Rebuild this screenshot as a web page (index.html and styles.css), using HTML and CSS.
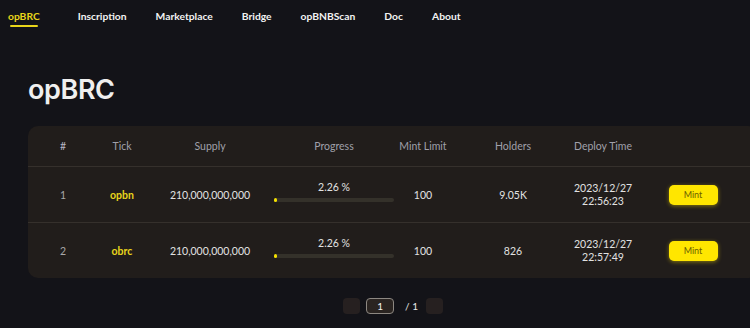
FILE: index.html
```html
<!DOCTYPE html>
<html>
<head>
    <title>opBRC</title>
    <link rel="stylesheet" href="styles.css">
</head>
<body>
    <nav class="nav">
        <a class="nav-item active">opBRC</a>
        <a class="nav-item">Inscription</a>
        <a class="nav-item">Marketplace</a>
        <a class="nav-item">Bridge</a>
        <a class="nav-item">opBNBScan</a>
        <a class="nav-item">Doc</a>
        <a class="nav-item">About</a>
    </nav>

    <main class="main">
        <h1 class="title">opBRC</h1>

        <div class="token-table">
            <div class="row head">
                <div class="cell hash">#</div>
                <div class="cell">Tick</div>
                <div class="cell">Supply</div>
                <div class="cell">Progress</div>
                <div class="cell">Mint Limit</div>
                <div class="cell">Holders</div>
                <div class="cell">Deploy Time</div>
                <div class="cell"></div>
            </div>
            <div class="row">
                <div class="cell idx">1</div>
                <div class="cell tick">opbn</div>
                <div class="cell">210,000,000,000</div>
                <div class="cell progress">
                    <span>2.26 %</span>
                    <div class="bar"><div class="fill" style="width: 2.26%"></div></div>
                </div>
                <div class="cell">100</div>
                <div class="cell">9.05K</div>
                <div class="cell time">2023/12/27<br>22:56:23</div>
                <div class="cell"><button class="mint-btn">Mint</button></div>
            </div>
            <div class="row">
                <div class="cell idx">2</div>
                <div class="cell tick">obrc</div>
                <div class="cell">210,000,000,000</div>
                <div class="cell progress">
                    <span>2.26 %</span>
                    <div class="bar"><div class="fill" style="width: 2.26%"></div></div>
                </div>
                <div class="cell">100</div>
                <div class="cell">826</div>
                <div class="cell time">2023/12/27<br>22:57:49</div>
                <div class="cell"><button class="mint-btn">Mint</button></div>
            </div>
        </div>

        <div class="pager">
            <span class="pager-btn"></span>
            <span class="pager-input">1</span>
            <span class="pager-total">/ 1</span>
            <span class="pager-btn"></span>
        </div>
    </main>
</body>
</html>
```

FILE: styles.css
```css
body {
    margin: 0;
    background: #131318;
    color: #e6e6e6;
    font-family: Lato, "Liberation Sans", sans-serif;
    overflow: hidden;
}
.nav {
    display: flex;
    gap: 29px;
    height: 32px;
    align-items: center;
    padding-left: 8px;
}
.nav-item {
    position: relative;
    font-size: 10.3px;
    font-weight: 700;
    color: #f2f2f2;
}
.nav-item.active {
    color: #e9d51a;
    margin-right: 9px;
}
.nav-item.active::after {
    content: "";
    position: absolute;
    left: 2px;
    right: 2px;
    bottom: -5px;
    height: 2px;
    border-radius: 1px;
    background: #e9d51a;
}
.main {
    width: 730px;
    padding-left: 28px;
}
.title {
    margin: 43px 0 21px;
    font-family: Inter, sans-serif;
    font-size: 27px;
    font-weight: 600;
    line-height: 30px;
    letter-spacing: -0.4px;
    color: #efefef;
}
.token-table {
    background: #211d1b;
    border-radius: 10px;
}
.row {
    display: grid;
    grid-template-columns: 70px 48px 128px 120px 58px 122px 58px 122px;
    height: 55px;
    align-items: center;
    border-bottom: 1px solid #35302c;
    font-size: 10.5px;
    color: #e2e2e2;
}
.row:last-child {
    border-bottom: none;
}
.row.head {
    height: 40px;
    color: #a0a0aa;
}
.cell {
    text-align: center;
}
.hash {
    color: #b8b8c4;
}
.idx {
    color: #a8a8a8;
}
.tick {
    color: #e8d51c;
    font-weight: 700;
}
.progress span {
    display: block;
    margin-top: -6px;
}
.bar {
    height: 4px;
    margin-top: 5px;
    border-radius: 2px;
    background: #34312a;
}
.fill {
    height: 100%;
    min-width: 3px;
    border-radius: 2px;
    background: #f3e000;
}
.time {
    line-height: 13px;
}
.mint-btn {
    width: 49px;
    height: 20px;
    border: none;
    border-radius: 5px;
    background: #ffe600;
    color: #6b5d00;
    font-family: Lato, sans-serif;
    font-size: 9px;
    box-shadow: 0 1px 4px rgba(255, 226, 0, 0.45);
}
.pager {
    display: flex;
    justify-content: center;
    align-items: center;
    gap: 6px;
    margin-top: 20px;
    font-size: 10px;
}
.pager-btn {
    width: 17px;
    height: 16px;
    border-radius: 4px;
    background: #262020;
}
.pager-input {
    width: 26px;
    height: 14px;
    line-height: 14px;
    border: 1px solid #8d8882;
    border-radius: 4px;
    background: #2a2421;
    text-align: center;
    color: #f0f0f0;
}
.pager-total {
    margin: 0 2px 0 5px;
    color: #e6e6e6;
}
```
